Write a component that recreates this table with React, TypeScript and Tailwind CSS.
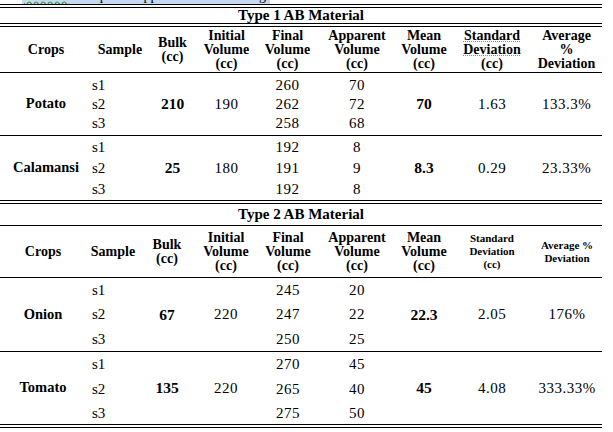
import React from 'react';

type Sample = { id: string; final: string; apparent: string };

type Crop = {
  name: string;
  bulk: string;
  initial: string;
  samples: Sample[];
  mean: string;
  sd: string;
  avg: string;
  group: string;
};

const type1: Crop[] = [
  {
    name: 'Potato',
    bulk: '210',
    initial: '190',
    samples: [
      { id: 's1', final: '260', apparent: '70' },
      { id: 's2', final: '262', apparent: '72' },
      { id: 's3', final: '258', apparent: '68' },
    ],
    mean: '70',
    sd: '1.63',
    avg: '133.3%',
    group: 'h-[63px] grid-rows-[19px_19px_19px] content-center border-b border-black',
  },
  {
    name: 'Calamansi',
    bulk: '25',
    initial: '180',
    samples: [
      { id: 's1', final: '192', apparent: '8' },
      { id: 's2', final: '191', apparent: '9' },
      { id: 's3', final: '192', apparent: '8' },
    ],
    mean: '8.3',
    sd: '0.29',
    avg: '23.33%',
    group: 'h-[64px] grid-rows-[21px_21px_21px] content-center',
  },
];

const type2: Crop[] = [
  {
    name: 'Onion',
    bulk: '67',
    initial: '220',
    samples: [
      { id: 's1', final: '245', apparent: '20' },
      { id: 's2', final: '247', apparent: '22' },
      { id: 's3', final: '250', apparent: '25' },
    ],
    mean: '22.3',
    sd: '2.05',
    avg: '176%',
    group: 'h-[74px] grid-rows-[24px_25px_24px] content-center border-b border-black',
  },
  {
    name: 'Tomato',
    bulk: '135',
    initial: '220',
    samples: [
      { id: 's1', final: '270', apparent: '45' },
      { id: 's2', final: '265', apparent: '40' },
      { id: 's3', final: '275', apparent: '50' },
    ],
    mean: '45',
    sd: '4.08',
    avg: '333.33%',
    group: 'h-[72px] grid-rows-[24px_26px_22px] content-start',
  },
];

const cols1 = 'grid-cols-[92px_56px_49px_59px_63px_76px_58px_78px_71px]';
const cols2 = 'grid-cols-[86px_54px_54px_64px_60px_78px_56px_80px_70px]';

function DoubleRule() {
  return <div className="h-[4px] border-y border-black" />;
}

function Head({ children, small }: { children: React.ReactNode; small?: boolean }) {
  return (
    <div
      className={
        small
          ? 'flex items-center justify-center text-center text-[11px] leading-[13px] font-bold'
          : 'flex items-center justify-center text-center text-[14px] leading-[14px] font-bold'
      }
    >
      <div>{children}</div>
    </div>
  );
}

function CropRows({ crop, cols, samplePad }: { crop: Crop; cols: string; samplePad: string }) {
  const span = 'row-span-3 self-center text-center';
  return (
    <div className={`grid ${cols} ${crop.group}`}>
      <div className={`${span} row-start-1 col-start-1 text-[14.5px] font-bold`}>{crop.name}</div>
      {crop.samples.map((s, i) => (
        <React.Fragment key={s.id}>
          <div className={`col-start-2 self-center text-[15px] ${samplePad}`} style={{ gridRow: i + 1 }}>
            {s.id}
          </div>
          <div className="col-start-5 self-center text-center text-[15px] tracking-[0.5px]" style={{ gridRow: i + 1 }}>
            {s.final}
          </div>
          <div className="col-start-6 self-center text-center text-[15px] tracking-[0.5px]" style={{ gridRow: i + 1 }}>
            {s.apparent}
          </div>
        </React.Fragment>
      ))}
      <div className={`${span} row-start-1 col-start-3 text-[15.5px] font-bold`}>{crop.bulk}</div>
      <div className={`${span} row-start-1 col-start-4 text-[15px] tracking-[0.5px]`}>{crop.initial}</div>
      <div className={`${span} row-start-1 col-start-7 text-[15.5px] font-bold`}>{crop.mean}</div>
      <div className={`${span} row-start-1 col-start-8 text-[15px] tracking-[0.5px]`}>{crop.sd}</div>
      <div className={`${span} row-start-1 col-start-9 text-[15px] tracking-[0.5px]`}>{crop.avg}</div>
    </div>
  );
}

export default function App() {
  return (
    <div className="w-[613px] h-[432px] overflow-hidden bg-white text-black font-[family-name:Liberation_Serif,Times_New_Roman,serif]">
      <div className="w-[602px]">
        {/* caption cut off at the top */}
        <div className="h-[4px] pl-[22px] flex">
          <div className="w-[248px] h-[4px] overflow-hidden bg-[#c6d9f1]">
            <p className="-mt-[11px] pl-[2px] text-[14px] leading-[14px] whitespace-nowrap">
              <span className="underline decoration-wavy decoration-[#4f9a4f]">Table 3.</span> Computed Apparent Volume using AB Material
            </p>
          </div>
        </div>

        {/* Type 1 */}
        <DoubleRule />
        <div className="h-[15px] flex items-center justify-center text-[15px] font-bold">Type 1 AB Material</div>
        <DoubleRule />
        <div className={`grid ${cols1} h-[46px] border-b border-black`}>
          <Head>Crops</Head>
          <Head>Sample</Head>
          <Head>
            Bulk
            <br />
            (cc)
          </Head>
          <Head>
            Initial
            <br />
            Volume
            <br />
            (cc)
          </Head>
          <Head>
            Final
            <br />
            Volume
            <br />
            (cc)
          </Head>
          <Head>
            Apparent
            <br />
            Volume
            <br />
            (cc)
          </Head>
          <Head>
            Mean
            <br />
            Volume
            <br />
            (cc)
          </Head>
          <Head>
            <span className="underline decoration-dotted decoration-[#e06666] decoration-[1px] underline-offset-[1px]">Standard</span>
            <br />
            <span className="underline decoration-dotted decoration-[#e06666] decoration-[1px] underline-offset-[1px]">Deviation</span>
            <br />
            (cc)
          </Head>
          <Head>
            Average
            <br />
            %
            <br />
            Deviation
          </Head>
        </div>
        {type1.map((c) => (
          <CropRows key={c.name} crop={c} cols={cols1} samplePad="pl-0" />
        ))}

        {/* Type 2 */}
        <DoubleRule />
        <div className="h-[22px] border-b border-black flex items-center justify-center text-[15px] font-bold">
          Type 2 AB Material
        </div>
        <div className={`grid ${cols2} h-[52px] border-b border-black`}>
          <Head>Crops</Head>
          <Head>Sample</Head>
          <Head>
            Bulk
            <br />
            (cc)
          </Head>
          <Head>
            Initial
            <br />
            Volume
            <br />
            (cc)
          </Head>
          <Head>
            Final
            <br />
            Volume
            <br />
            (cc)
          </Head>
          <Head>
            Apparent
            <br />
            Volume
            <br />
            (cc)
          </Head>
          <Head>
            Mean
            <br />
            Volume
            <br />
            (cc)
          </Head>
          <Head small>
            Standard
            <br />
            Deviation
            <br />
            (cc)
          </Head>
          <Head small>
            Average %
            <br />
            Deviation
          </Head>
        </div>
        {type2.map((c) => (
          <CropRows key={c.name} crop={c} cols={cols2} samplePad="pl-[6px]" />
        ))}
        <DoubleRule />

        {/* next paragraph, cut off at the bottom */}
        <div className="h-[4px] overflow-hidden">
          <p className="pt-[1px] pl-[40px] text-[15px] leading-[16px] whitespace-nowrap tracking-[1px]">
            The table shows that Tomato had the highest apparent volume deviation in both types of AB material used.
          </p>
        </div>
      </div>
    </div>
  );
}
